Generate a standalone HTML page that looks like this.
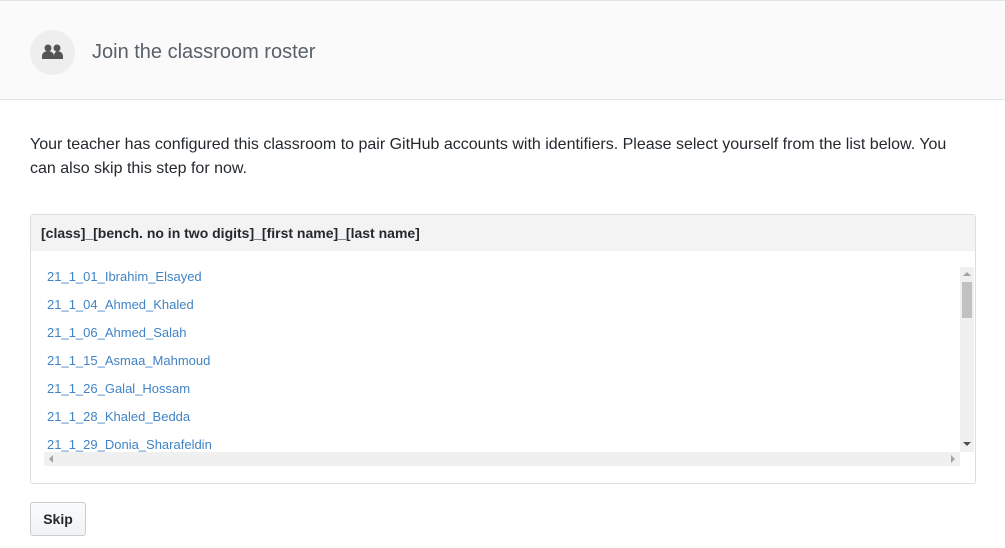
<!DOCTYPE html>
<html><head><style>
body{margin:0;width:1005px;height:548px;overflow:hidden;background:#fff;font-family:"Liberation Sans",sans-serif;position:relative}
.hdr{position:absolute;left:0;top:0;width:1005px;height:98px;background:#fafafa;border-top:1px solid #e1e4e8;border-bottom:1px solid #e1e4e8}
.circ{position:absolute;left:30px;top:29px;width:45px;height:45px;border-radius:50%;background:#eee}
.title{position:absolute;left:92px;top:40px;font-size:20px;color:#586069}
.p{position:absolute;left:30px;top:133px;width:930px;font-size:16px;line-height:24px;color:#24292e}
.box{position:absolute;left:30px;top:214px;width:944px;height:268px;border:1px solid #ddd;border-radius:3px}
.bh{height:36px;background:#f3f3f3;font-weight:bold;font-size:14px;color:#24292e;line-height:36px;padding-left:10px}
.item{position:absolute;left:47px;font-size:13px;color:#4183c4}
.vs{position:absolute;left:960px;top:267px;width:14px;height:185px;background:#f0f0f0}
.hs{position:absolute;left:44px;top:452px;width:916px;height:14px;background:#f0f0f0}
.btn{position:absolute;left:30px;top:502px;width:54px;height:32px;border:1px solid #ccc;border-radius:3px;background:linear-gradient(#fafbfc,#eff3f6);font-weight:bold;font-size:14px;line-height:32px;text-align:center;color:#24292e}
</style></head><body>
<div class="hdr"><div class="circ"><svg width="45" height="45" viewBox="0 0 45 45"><g fill="#555"><circle cx="18" cy="18" r="3.5"/><path d="M12 29v-3c0-3 3-5 6-5s6 2 6 5v3z"/><circle cx="27" cy="18" r="3.5"/><path d="M24 29v-3c0-2 1-4 3-5 3 0 6 2 6 5v3z"/></g></svg></div><div class="title">Join the classroom roster</div></div>
<div class="p">Your teacher has configured this classroom to pair GitHub accounts with identifiers. Please select yourself from the list below. You can also skip this step for now.</div>
<div class="box"><div class="bh">[class]_[bench. no in two digits]_[first name]_[last name]</div></div>
<div class="item" style="top:269px">21_1_01_Ibrahim_Elsayed</div>
<div class="item" style="top:297px">21_1_04_Ahmed_Khaled</div>
<div class="item" style="top:325px">21_1_06_Ahmed_Salah</div>
<div class="item" style="top:353px">21_1_15_Asmaa_Mahmoud</div>
<div class="item" style="top:381px">21_1_26_Galal_Hossam</div>
<div class="item" style="top:409px">21_1_28_Khaled_Bedda</div>
<div class="item" style="top:437px">21_1_29_Donia_Sharafeldin</div>
<div class="vs"><div style="position:absolute;left:2px;top:15px;width:10px;height:36px;background:#c1c1c1"></div>
<div style="position:absolute;left:3px;top:5px;border:4px solid transparent;border-bottom-color:#a3a3a3;border-top:0"></div>
<div style="position:absolute;left:3px;top:175px;border:4px solid transparent;border-top-color:#505050;border-bottom:0"></div></div>
<div class="hs"><div style="position:absolute;left:5px;top:3px;border:4px solid transparent;border-right-color:#a3a3a3;border-left:0"></div>
<div style="position:absolute;left:907px;top:3px;border:4px solid transparent;border-left-color:#a3a3a3;border-right:0"></div></div>
<div class="btn">Skip</div>
</body></html>
